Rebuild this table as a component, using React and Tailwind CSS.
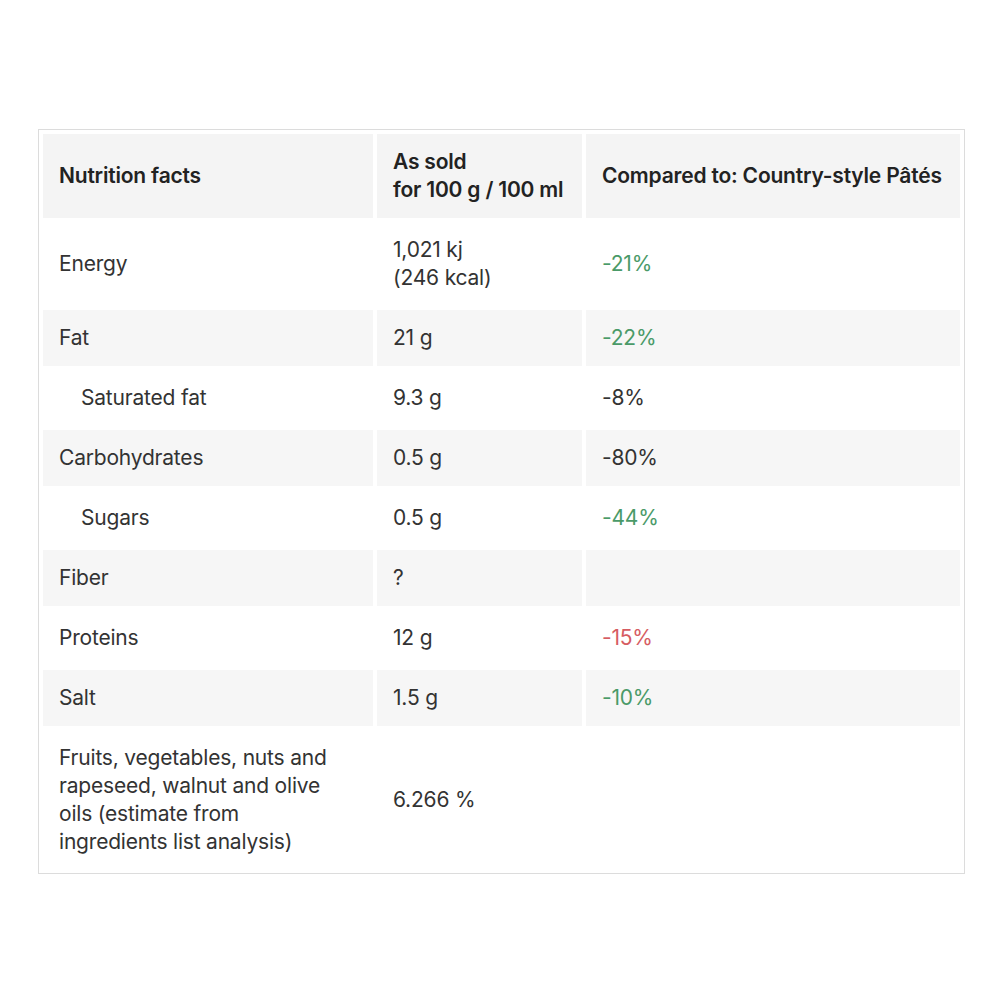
import React from "react";

const rows = [
  { name: "Energy", value: ["1,021 kj", "(246 kcal)"], cmp: "-21%", tone: "green", tall: true },
  { name: "Fat", value: ["21 g"], cmp: "-22%", tone: "green" },
  { name: "Saturated fat", value: ["9.3 g"], cmp: "-8%", sub: true },
  { name: "Carbohydrates", value: ["0.5 g"], cmp: "-80%" },
  { name: "Sugars", value: ["0.5 g"], cmp: "-44%", tone: "green", sub: true },
  { name: "Fiber", value: ["?"], cmp: "" },
  { name: "Proteins", value: ["12 g"], cmp: "-15%", tone: "red" },
  { name: "Salt", value: ["1.5 g"], cmp: "-10%", tone: "green" },
];

const toneClass = {
  green: "text-[#4a9a68]",
  red: "text-[#d65c62]",
};

export default function App() {
  return (
    <div className="bg-white min-h-screen pt-[129px] pl-[38px] font-['Inter',sans-serif] text-[21px] leading-[28px] text-[#333] tracking-[-0.2px]">
      <table className="w-[927px] border border-[#dcdcdc] border-separate border-spacing-[4px]">
        <thead>
          <tr className="bg-[#f4f4f4] text-[#222]">
            <th className="w-[330px] h-[84px] px-4 text-left align-middle font-semibold">Nutrition facts</th>
            <th className="w-[205px] px-4 text-left align-middle font-semibold">
              As sold
              <br />
              for 100 g / 100 ml
            </th>
            <th className="px-4 text-left align-middle font-semibold">Compared to: Country-style Pâtés</th>
          </tr>
        </thead>
        <tbody>
          {rows.map((r, i) => (
            <tr key={r.name} className={i % 2 === 1 ? "bg-[#f6f6f6]" : "bg-white"}>
              <td className={`${r.tall ? "h-[84px]" : "h-[56px]"} ${r.sub ? "pl-[38px]" : "pl-4"} pr-4 align-middle`}>
                {r.name}
              </td>
              <td className="px-4 align-middle">
                {r.value.map((v, j) => (
                  <div key={j}>{v}</div>
                ))}
              </td>
              <td className={`px-4 align-middle ${toneClass[r.tone] || ""}`}>{r.cmp}</td>
            </tr>
          ))}
          <tr className="bg-white">
            <td className="h-[139px] px-4 align-middle">
              Fruits, vegetables, nuts and
              <br />
              rapeseed, walnut and olive
              <br />
              oils (estimate from
              <br />
              ingredients list analysis)
            </td>
            <td className="px-4 align-middle">6.266 %</td>
            <td className="px-4 align-middle"></td>
          </tr>
        </tbody>
      </table>
    </div>
  );
}
